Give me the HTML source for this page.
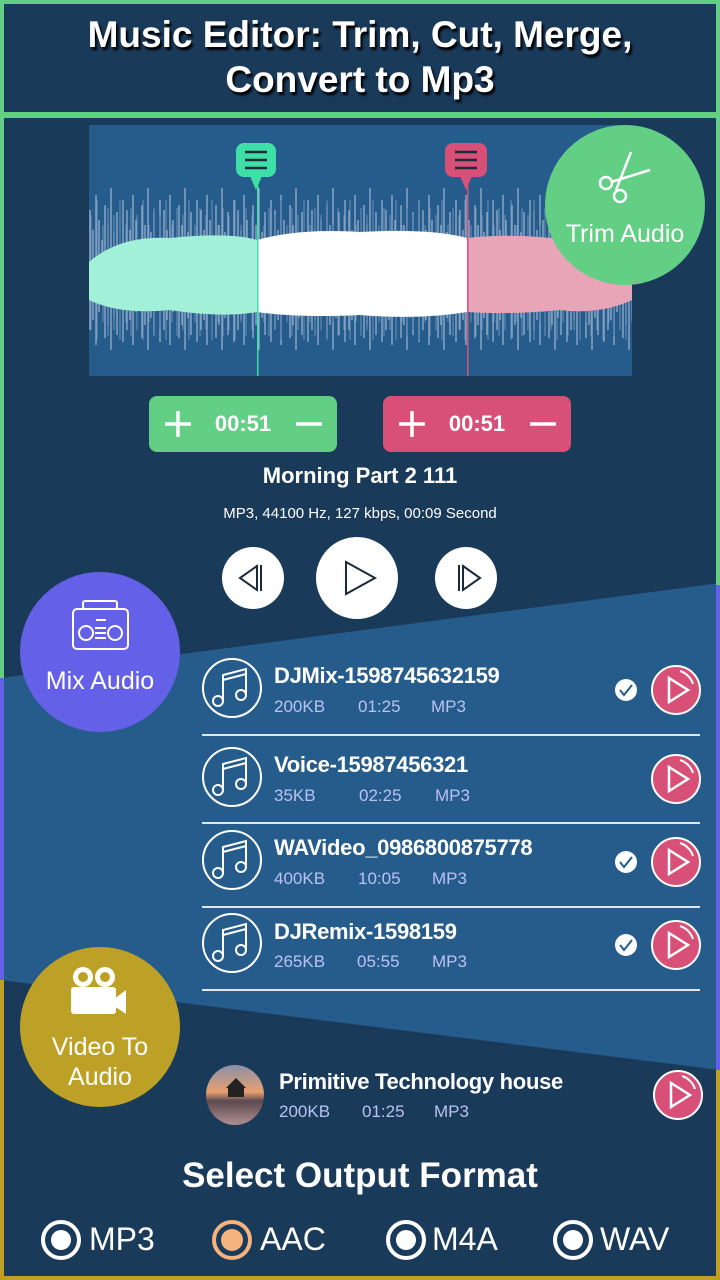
<!DOCTYPE html>
<html><head><meta charset="utf-8"><style>
*{margin:0;padding:0;box-sizing:border-box}
body{width:720px;height:1280px;position:relative;overflow:hidden;background:#1a3a5a;font-family:"Liberation Sans",sans-serif;color:#fff}
.abs{position:absolute}
.t{position:absolute;white-space:nowrap}
.meta{position:absolute;font-size:17px;color:#b9c2f2;white-space:nowrap}
.ttl{position:absolute;font-size:22px;font-weight:bold;white-space:nowrap;letter-spacing:-0.3px}
.div{position:absolute;left:202px;width:498px;height:2px;background:#dfe6ee}
</style></head><body>
<svg class="abs" style="left:0;top:0" width="720" height="1280">
<polygon points="0,678 720,583 720,1070 0,980" fill="#265c8c"/>
<rect x="0" y="0" width="720" height="4" fill="#62cf85"/>
<rect x="0" y="112" width="720" height="6" fill="#62cf85"/>
<rect x="0" y="0" width="4" height="678" fill="#62cf85"/>
<rect x="716" y="0" width="4" height="585" fill="#62cf85"/>
<rect x="0" y="678" width="4" height="302" fill="#6560e8"/>
<rect x="716" y="585" width="4" height="485" fill="#6560e8"/>
<rect x="0" y="980" width="4" height="300" fill="#bda126"/>
<rect x="716" y="1070" width="4" height="210" fill="#bda126"/>
<rect x="0" y="1276" width="720" height="4" fill="#bda126"/>
<rect x="89" y="125" width="543" height="251" fill="#265c8c"/>
<defs>
<pattern id="wa" x="89" y="0" width="37" height="1280" patternUnits="userSpaceOnUse">
<g stroke="#a9bdd6" stroke-width="1.3">
<line x1="1" y1="210" x2="1" y2="330"/><line x1="4" y1="230" x2="4" y2="320"/><line x1="7" y1="195" x2="7" y2="345"/><line x1="10" y1="220" x2="10" y2="312"/><line x1="13" y1="240" x2="13" y2="300"/><line x1="16" y1="205" x2="16" y2="338"/><line x1="19" y1="225" x2="19" y2="325"/><line x1="22" y1="188" x2="22" y2="350"/><line x1="25" y1="232" x2="25" y2="318"/><line x1="28" y1="212" x2="28" y2="335"/><line x1="31" y1="245" x2="31" y2="305"/><line x1="34" y1="200" x2="34" y2="342"/>
</g></pattern>
<pattern id="wb" x="89" y="0" width="23" height="1280" patternUnits="userSpaceOnUse">
<g stroke="#6f90b8" stroke-width="1">
<line x1="2" y1="215" x2="2" y2="330"/><line x1="8" y1="200" x2="8" y2="340"/><line x1="14" y1="225" x2="14" y2="322"/><line x1="19" y1="208" x2="19" y2="336"/>
</g></pattern>
</defs>
<rect x="89" y="180" width="543" height="180" fill="url(#wa)" opacity="0.85"/>
<rect x="89" y="180" width="543" height="180" fill="url(#wb)"/>
<path d="M89 262 Q120 235 170 238 Q230 232 257 240 V312 Q220 318 170 310 Q120 315 89 300 Z" fill="#a2f0d8"/>
<path d="M257 240 Q300 228 360 232 Q430 228 467 238 V312 Q420 320 360 315 Q300 318 257 312 Z" fill="#fff"/>
<path d="M467 238 Q520 232 580 242 Q615 250 632 262 V300 Q600 315 560 310 Q510 315 467 312 Z" fill="#e8a5b8"/>
<rect x="257" y="185" width="1.5" height="191" fill="#3ee0a8"/>
<rect x="467" y="185" width="1.5" height="191" fill="#d85078"/>
<rect x="236" y="143" width="40" height="34" rx="8" fill="#3ee0a8"/>
<polygon points="250,176 262,176 256,190" fill="#3ee0a8"/>
<rect x="445" y="143" width="42" height="34" rx="8" fill="#d85078"/>
<polygon points="460,176 472,176 466,190" fill="#d85078"/>
<g stroke="#1a2a3a" stroke-width="2.5"><line x1="245" y1="152" x2="267" y2="152"/><line x1="245" y1="160" x2="267" y2="160"/><line x1="245" y1="168" x2="267" y2="168"/><line x1="455" y1="152" x2="477" y2="152"/><line x1="455" y1="160" x2="477" y2="160"/><line x1="455" y1="168" x2="477" y2="168"/></g>
<circle cx="625" cy="205" r="80" fill="#62cf85"/>
<g stroke="#fff" stroke-width="2.5" fill="none"><circle cx="606" cy="183" r="6"/><circle cx="620" cy="196" r="6"/><path d="M611 182 L650 170 M616 190 L631 152"/></g>
<circle cx="100" cy="652" r="80" fill="#6560e8"/>
<g stroke="#fff" stroke-width="2" fill="none"><rect x="73" y="609" width="55" height="40" rx="4"/><rect x="83" y="601" width="34" height="8" rx="2"/><circle cx="86" cy="633" r="7"/><circle cx="115" cy="633" r="7"/><path d="M95 628h11M95 633h11M95 638h11M96 620h10"/></g>
<circle cx="100" cy="1027" r="80" fill="#bda126"/>
<g fill="#fff"><circle cx="83" cy="977" r="10"/><circle cx="105" cy="977" r="10"/><rect x="71" y="987" width="45" height="27" rx="3"/><polygon points="114,999 126,990 126,1014 114,1006"/></g>
<circle cx="83" cy="977" r="5" fill="#bda126"/><circle cx="105" cy="977" r="5" fill="#bda126"/>
<rect x="149" y="396" width="188" height="56" rx="8" fill="#62cf85"/>
<rect x="383" y="396" width="188" height="56" rx="8" fill="#d85078"/>
<g stroke="#fff" stroke-width="3.5"><path d="M165 424h26M178 411v26M296 424h26M399 424h26M412 411v26M530 424h26"/></g>
<circle cx="253" cy="578" r="31" fill="#fff"/><circle cx="357" cy="578" r="41" fill="#fff"/><circle cx="466" cy="578" r="31" fill="#fff"/>
<g stroke="#1a2a3a" stroke-width="2" fill="none"><path d="M257 566 L240 578 L257 590 Z M261 565 V591"/><path d="M346 562 L375 578 L346 594 Z"/><path d="M463 566 L480 578 L463 590 Z M459 565 V591"/></g>
<g id="note" stroke="#fff" stroke-width="2" fill="none">
<circle cx="232" cy="688" r="29"/><path d="M223 700 V675 L246 669 V694"/><path d="M223 680 L246 674"/><circle cx="218" cy="701" r="5"/><circle cx="241" cy="695" r="5"/></g>
<use href="#note" y="89"/><use href="#note" y="172"/><use href="#note" y="255"/>
<g id="pl"><circle cx="676" cy="690" r="24" fill="#d85078" stroke="#fff" stroke-width="2"/><path d="M669 678 L688 690 L669 702 Z" stroke="#fff" stroke-width="2.5" fill="none"/><path d="M680 671 A20 20 0 0 1 693 684" stroke="#fff" stroke-width="2" fill="none"/></g>
<use href="#pl" y="89"/><use href="#pl" y="172"/><use href="#pl" y="255"/><use href="#pl" x="2" y="405"/>
<g id="ck"><circle cx="626" cy="690" r="11" fill="#fff"/><path d="M620 690 L624 695 L632 685" stroke="#265c8c" stroke-width="2" fill="none"/></g>
<use href="#ck" y="172"/><use href="#ck" y="255"/>
<defs><linearGradient id="sk" x1="0" y1="0" x2="0" y2="1"><stop offset="0" stop-color="#8a90a8"/><stop offset="0.45" stop-color="#e8a070"/><stop offset="0.6" stop-color="#5a4a50"/><stop offset="1" stop-color="#b09090"/></linearGradient></defs>
<ellipse cx="235" cy="1095" rx="29" ry="30" fill="url(#sk)"/>
<rect x="228" y="1087" width="16" height="10" fill="#222"/><polygon points="226,1088 236,1078 246,1088" fill="#222"/>
<g fill="none" stroke="#fff" stroke-width="4"><circle cx="61" cy="1240" r="18"/><circle cx="406" cy="1240" r="18"/><circle cx="573" cy="1240" r="18"/></g>
<g fill="#fff"><circle cx="61" cy="1240" r="10"/><circle cx="406" cy="1240" r="10"/><circle cx="573" cy="1240" r="10"/></g>
<circle cx="232" cy="1240" r="18" fill="none" stroke="#f5b37e" stroke-width="4"/><circle cx="232" cy="1240" r="11" fill="#f5b37e"/>
</svg>
<div class="t" style="left:0;width:720px;top:12px;text-align:center;font-size:37px;font-weight:bold;line-height:45px;text-shadow:2px 3px 2px #000">Music Editor: Trim, Cut, Merge,<br>Convert to Mp3</div>
<div class="t" style="left:545px;width:160px;text-align:center;top:220px;font-size:25px">Trim Audio</div>
<div class="t" style="left:20px;width:160px;text-align:center;top:667px;font-size:25px">Mix Audio</div>
<div class="t" style="left:20px;width:160px;text-align:center;top:1032px;font-size:25px;line-height:30px">Video To<br>Audio</div>
<div class="t" style="left:149px;width:188px;text-align:center;top:411px;font-size:22px;font-weight:bold">00:51</div>
<div class="t" style="left:383px;width:188px;text-align:center;top:411px;font-size:22px;font-weight:bold">00:51</div>
<div class="t" style="left:0;width:720px;text-align:center;top:463px;font-size:22px;font-weight:bold">Morning Part 2 111</div>
<div class="t" style="left:0;width:720px;text-align:center;top:505px;font-size:15px">MP3, 44100 Hz, 127 kbps, 00:09 Second</div>
<div class="ttl" style="left:274px;top:663px">DJMix-1598745632159</div>
<div class="meta" style="left:274px;top:697px">200KB</div><div class="meta" style="left:358px;top:697px">01:25</div><div class="meta" style="left:431px;top:697px">MP3</div>
<div class="div" style="top:734px"></div>
<div class="ttl" style="left:274px;top:752px">Voice-15987456321</div>
<div class="meta" style="left:274px;top:786px">35KB</div><div class="meta" style="left:359px;top:786px">02:25</div><div class="meta" style="left:435px;top:786px">MP3</div>
<div class="div" style="top:822px"></div>
<div class="ttl" style="left:274px;top:835px">WAVideo_0986800875778</div>
<div class="meta" style="left:274px;top:869px">400KB</div><div class="meta" style="left:358px;top:869px">10:05</div><div class="meta" style="left:432px;top:869px">MP3</div>
<div class="div" style="top:906px"></div>
<div class="ttl" style="left:274px;top:919px">DJRemix-1598159</div>
<div class="meta" style="left:274px;top:952px">265KB</div><div class="meta" style="left:357px;top:952px">05:55</div><div class="meta" style="left:432px;top:952px">MP3</div>
<div class="div" style="top:989px"></div>
<div class="ttl" style="left:279px;top:1069px">Primitive Technology house</div>
<div class="meta" style="left:279px;top:1102px">200KB</div><div class="meta" style="left:362px;top:1102px">01:25</div><div class="meta" style="left:434px;top:1102px">MP3</div>
<div class="t" style="left:0;width:720px;text-align:center;top:1156px;font-size:35px;font-weight:bold">Select Output Format</div>
<div class="t" style="left:89px;top:1221px;font-size:32px">MP3</div>
<div class="t" style="left:260px;top:1221px;font-size:32px">AAC</div>
<div class="t" style="left:432px;top:1221px;font-size:32px">M4A</div>
<div class="t" style="left:600px;top:1221px;font-size:32px">WAV</div>
</body></html>
